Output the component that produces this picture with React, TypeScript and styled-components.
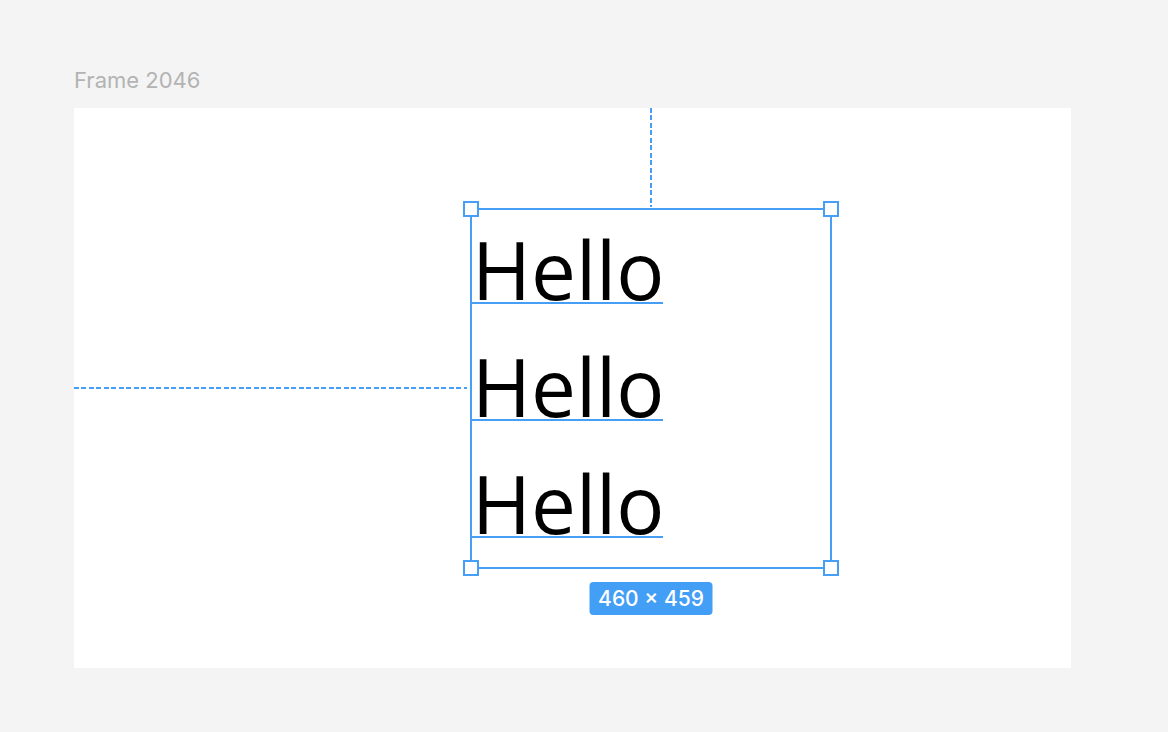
import React from "react";
import styled, { createGlobalStyle } from "styled-components";

const Global = createGlobalStyle`
  html, body { margin: 0; padding: 0; background: #f4f4f4; }
  body { font-family: Inter, "Noto Sans", sans-serif; }
`;

const BLUE = "#479ef5";

const Page = styled.div`
  width: 1168px;
  height: 732px;
  box-sizing: border-box;
  padding: 68px 0 0 74px;
  background: #f4f4f4;
`;

const FrameLabel = styled.div`
  font-family: Inter, sans-serif;
  font-size: 22px;
  line-height: 25px;
  color: #b3b3b3;
  margin-bottom: 15px;
`;

const Frame = styled.div`
  width: 997px;
  height: 560px;
  box-sizing: border-box;
  background: #ffffff;
  padding: 100px 0 0 396px;
`;

const Selection = styled.div`
  position: relative;
  width: 362px;
  height: 361px;
  box-sizing: border-box;
  border: 2px solid ${BLUE};
`;

const Handle = styled.div<{ $v: "top" | "bottom"; $h: "left" | "right" }>`
  position: absolute;
  width: 16px;
  height: 16px;
  box-sizing: border-box;
  border: 2px solid ${BLUE};
  background: #ffffff;
  ${(p) => p.$v}: -9px;
  ${(p) => p.$h}: -9px;
`;

const VGuide = styled.div`
  position: absolute;
  left: 178px;
  top: -102px;
  width: 2px;
  height: 99px;
  background: repeating-linear-gradient(
    to bottom,
    ${BLUE} 0 5px,
    transparent 5px 7.5px
  );
`;

const HGuide = styled.div`
  position: absolute;
  left: -398px;
  top: 177px;
  width: 393px;
  height: 2px;
  background: repeating-linear-gradient(
    to right,
    ${BLUE} 0 5px,
    transparent 5px 7.5px
  );
`;

const Lines = styled.div`
  display: flex;
  flex-direction: column;
  margin-left: -1px;
`;

const TextLine = styled.div`
  position: relative;
  height: 117px;
  font-family: "Open Sans", "Noto Sans", sans-serif;
  font-size: 80px;
  line-height: 117px;
  color: #000;
  padding-left: 1px;
  &::after {
    content: "";
    position: absolute;
    left: 0;
    top: 92px;
    width: 192px;
    height: 2px;
    background: ${BLUE};
  }
`;

const SizeBadge = styled.div`
  position: absolute;
  left: 50%;
  top: calc(100% + 15px);
  transform: translateX(-50%);
  width: 123px;
  height: 33px;
  border-radius: 4px;
  background: #439ef5;
  color: #fff;
  font-family: Inter, sans-serif;
  font-weight: 500;
  font-size: 21px;
  display: flex;
  align-items: center;
  justify-content: center;
  white-space: nowrap;
`;

export default function App() {
  return (
    <>
      <Global />
      <Page>
        <FrameLabel>Frame 2046</FrameLabel>
        <Frame>
          <Selection>
            <VGuide />
            <HGuide />
            <Lines>
              <TextLine>Hello</TextLine>
              <TextLine>Hello</TextLine>
              <TextLine>Hello</TextLine>
            </Lines>
            <Handle $v="top" $h="left" />
            <Handle $v="top" $h="right" />
            <Handle $v="bottom" $h="left" />
            <Handle $v="bottom" $h="right" />
            <SizeBadge>460 × 459</SizeBadge>
          </Selection>
        </Frame>
      </Page>
    </>
  );
}
